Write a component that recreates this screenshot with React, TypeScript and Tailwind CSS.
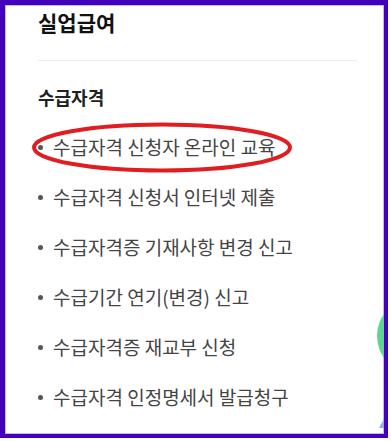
import React from "react";

const items = [
  "수급자격 신청자 온라인 교육",
  "수급자격 신청서 인터넷 제출",
  "수급자격증 기재사항 변경 신고",
  "수급기간 연기(변경) 신고",
  "수급자격증 재교부 신청",
  "수급자격 인정명세서 발급청구",
];

export default function App() {
  return (
    <div
      className="w-[391px] h-[441px] bg-white overflow-hidden"
      style={{ fontFamily: '"Noto Sans CJK KR", "Noto Sans", sans-serif' }}
    >
      <div className="relative w-[388px] h-[438px] border-t-[5px] border-l-[5px] border-r-[4px] border-b-[4px] border-[#4300bd] overflow-hidden">
        <div className="absolute inset-0 border border-[#c4b6ee] pointer-events-none" />
        <div className="absolute left-[372px] top-[293px] w-[76px] h-[76px] rounded-full bg-[#60d292]" />
        <svg className="absolute left-[369px] top-[407px]" width="12" height="20" viewBox="0 0 12 20">
          <polygon points="5,16 12,3 12,16" fill="#8eabf3" />
        </svg>
        <div className="pl-[33px] pr-[27px] pt-[3px]">
          <h1 className="text-[21px] leading-[28px] font-bold text-[#111]">실업급여</h1>
          <div className="mt-[24px] h-px bg-[#ebebeb]" />
          <h2 className="mt-[24px] text-[18px] leading-[24px] font-bold text-[#222]">수급자격</h2>
          <ul className="mt-[13px]">
            {items.map((t) => (
              <li key={t} className="h-[50px] flex items-center text-[19px] text-[#444]">
                <span className="w-[5px] h-[5px] rounded-full bg-[#555] mr-[10px]" />
                <span>{t}</span>
              </li>
            ))}
          </ul>
        </div>
        <svg
          className="absolute left-[26px] top-[117px]"
          width="262"
          height="51"
          viewBox="0 0 262 51"
        >
          <ellipse cx="131" cy="25.5" rx="128" ry="23" fill="none" stroke="#e01e22" strokeWidth="4" />
        </svg>
      </div>
    </div>
  );
}
